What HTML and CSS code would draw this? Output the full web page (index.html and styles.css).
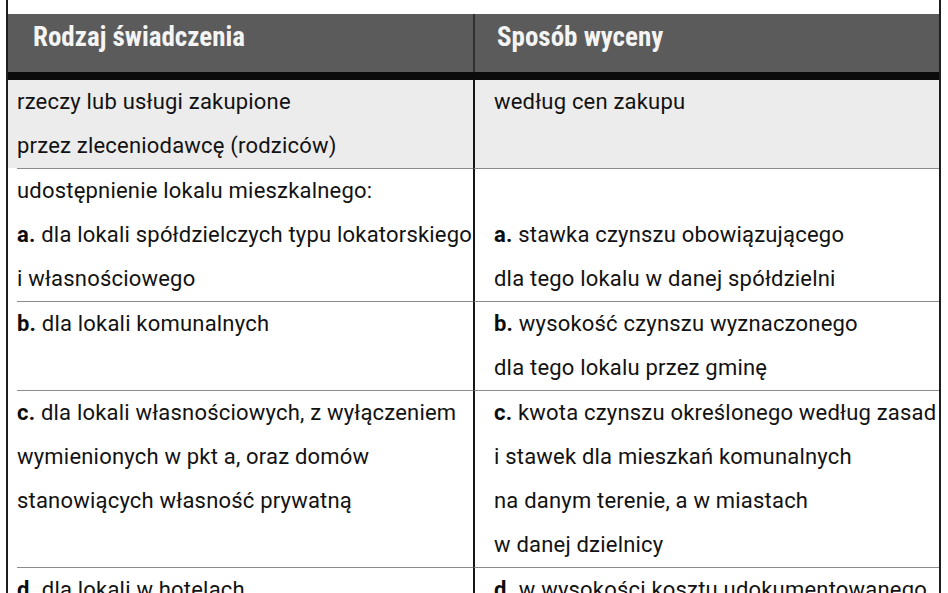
FILE: index.html
```html
<!DOCTYPE html>
<html lang="pl">
<head>
<meta charset="utf-8">
<title>Rodzaj świadczenia – sposób wyceny</title>
<link rel="stylesheet" href="styles.css">
</head>
<body>
<div class="frame">
  <div class="table">
    <div class="row head">
      <div class="cell l">Rodzaj świadczenia</div>
      <div class="cell r">Sposób wyceny</div>
    </div>
    <div class="row shaded first">
      <div class="cell l">
        <div class="ln">rzeczy lub usługi zakupione</div>
        <div class="ln">przez zleceniodawcę (rodziców)</div>
      </div>
      <div class="cell r">
        <div class="ln">według cen zakupu</div>
      </div>
    </div>
    <div class="row">
      <div class="cell l">
        <div class="ln">udostępnienie lokalu mieszkalnego:</div>
        <div class="ln"><b>a.</b> dla lokali spółdzielczych typu lokatorskiego</div>
        <div class="ln">i własnościowego</div>
      </div>
      <div class="cell r bottom">
        <div class="ln"><b>a.</b> stawka czynszu obowiązującego</div>
        <div class="ln">dla tego lokalu w danej spółdzielni</div>
      </div>
    </div>
    <div class="row">
      <div class="cell l">
        <div class="ln"><b>b.</b> dla lokali komunalnych</div>
      </div>
      <div class="cell r">
        <div class="ln"><b>b.</b> wysokość czynszu wyznaczonego</div>
        <div class="ln">dla tego lokalu przez gminę</div>
      </div>
    </div>
    <div class="row">
      <div class="cell l">
        <div class="ln"><b>c.</b> dla lokali własnościowych, z wyłączeniem</div>
        <div class="ln">wymienionych w pkt a, oraz domów</div>
        <div class="ln">stanowiących własność prywatną</div>
      </div>
      <div class="cell r">
        <div class="ln"><b>c.</b> kwota czynszu określonego według zasad</div>
        <div class="ln">i stawek dla mieszkań komunalnych</div>
        <div class="ln">na danym terenie, a w miastach</div>
        <div class="ln">w danej dzielnicy</div>
      </div>
    </div>
    <div class="row">
      <div class="cell l">
        <div class="ln"><b>d.</b> dla lokali w hotelach</div>
      </div>
      <div class="cell r">
        <div class="ln"><b>d.</b> w wysokości kosztu udokumentowanego</div>
      </div>
    </div>
  </div>
</div>
</body>
</html>
```
FILE: styles.css
```css
html, body {
  margin: 0;
  padding: 0;
  background: #ffffff;
}
body {
  font-family: Roboto, "Liberation Sans", sans-serif;
  color: #121212;
  overflow: hidden;
}
.frame {
  margin-left: 6px;
  width: 935px;
  height: 593px;
  box-sizing: border-box;
  border-left: 2px solid #1e1e1e;
  border-right: 2px solid #1e1e1e;
  padding-top: 14px;
  overflow: hidden;
}
.table {
  display: flex;
  flex-direction: column;
}
.row {
  display: grid;
  grid-template-columns: 465px 1fr;
}
.head {
  height: 58px;
  background: #5b5b5b;
  border-bottom: 8px solid #0b0b0b;
  font-family: "Roboto Condensed", Roboto, sans-serif;
  font-weight: 700;
  font-size: 27px;
  line-height: 46px;
  color: #f4f4f4;
  box-sizing: content-box;
}
.head .cell.l {
  padding-left: 25px;
}
.head .cell.r {
  padding-left: 22px;
  border-left: 2px solid #303030;
}
.shaded {
  background: #ececec;
}
.row:not(.head) .cell {
  font-size: 22px;
  line-height: 44px;
  letter-spacing: 0.2px;
  border-top: 1px solid #8c8c8c;
}
.row.first .cell {
  border-top: 1px solid transparent;
  margin-top: -1px;
}
.row:not(.head) .cell.l {
  margin-left: 9px;
}
.row:not(.head) .cell.r {
  border-left: 2px solid #161616;
  padding-left: 19px;
}
.cell.bottom {
  display: flex;
  flex-direction: column;
  justify-content: flex-end;
}
.ln {
  white-space: nowrap;
}
b {
  font-weight: 700;
  color: #0c0c0c;
}
```
